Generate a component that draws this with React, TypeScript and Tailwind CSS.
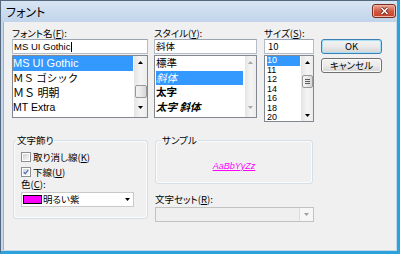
import React from 'react';

// 小さな三角形（スクロールバー・コンボの矢印）
const Tri = ({ up = false, color = '#000' }: { up?: boolean; color?: string }) => (
  <svg width="5" height="3" viewBox="0 0 5 3" className="block">
    <polygon points={up ? '0,3 5,3 2.5,0' : '0,0 5,0 2.5,3'} fill={color} />
  </svg>
);

const Label = ({ text, k }: { text: string; k: string }) => (
  <div className="h-[12px] leading-[12px] text-[9.5px] whitespace-nowrap">
    {text}(<u className="decoration-1 underline-offset-1">{k}</u>):
  </div>
);

interface ScrollProps {
  w: string;
  gap: string;
  upMt: string;
  downMb: string;
  thumbMt?: string;
  grip?: boolean;
  disabled?: boolean;
}

const ScrollBar = ({ w, gap, upMt, downMb, thumbMt, grip, disabled }: ScrollProps) => {
  const color = disabled ? '#a8a8a8' : '#000';
  return (
    <div className={`${w} ${gap} flex flex-col items-center bg-gradient-to-r from-[#e4e4e4] via-[#f4f4f4] to-[#ededed]`}>
      <div className={upMt}>
        <Tri up color={color} />
      </div>
      {thumbMt && (
        <div
          className={`${thumbMt} w-[calc(100%-1px)] h-[13px] rounded-[2px] border border-[#9a9a9a] bg-gradient-to-r from-[#f3f3f3] via-[#e9e9e9] to-[#d6d6d6] flex flex-col items-center justify-center gap-[1px]`}
        >
          {grip && (
            <>
              <div className="w-[5px] h-px bg-[#5c5c5c]" />
              <div className="w-[5px] h-px bg-[#5c5c5c]" />
              <div className="w-[5px] h-px bg-[#5c5c5c]" />
            </>
          )}
        </div>
      )}
      <div className={`mt-auto ${downMb}`}>
        <Tri color={color} />
      </div>
    </div>
  );
};

const TextBox = ({ children, pl }: { children: React.ReactNode; pl: string }) => (
  <div
    className={`h-[15px] border border-[#b4bcc7] border-t-[#9aa3ae] bg-white ${pl} text-[9.5px] leading-[13px] whitespace-nowrap flex items-center`}
  >
    {children}
  </div>
);

const CheckBox = ({ checked }: { checked?: boolean }) => (
  <div className="w-[10px] h-[10px] border border-[#8e8f8f] bg-white p-[1px]">
    <div className="w-full h-full bg-gradient-to-br from-[#d4d4d4] to-[#f7f7f7] flex items-center justify-center">
      {checked && (
        <svg width="8" height="8" viewBox="0 0 8 8" className="block">
          <path d="M1 4.2 L3 6.3 L7 1.2" stroke="#3b63ad" strokeWidth="1.5" fill="none" />
        </svg>
      )}
    </div>
  </div>
);

const Button = ({ children, def }: { children: React.ReactNode; def?: boolean }) => (
  <div
    className={`h-[15px] rounded-[3px] border ${
      def ? 'border-[#3c7fb1] shadow-[inset_0_0_0_1px_#a6e0f8]' : 'border-[#707070] shadow-[inset_0_0_0_1px_#fbfbfb]'
    } bg-gradient-to-b from-[#f2f2f2] via-[#ebebeb] to-[#d4d4d4] flex items-center justify-center text-[9.5px] leading-none`}
  >
    {children}
  </div>
);

const CloseButton = () => (
  <div className="mt-[3px] mr-[1px] w-[24px] h-[14px] rounded-[3px] border border-[#7b2a1d] bg-gradient-to-b from-[#e9a898] via-[#d25a45] to-[#c23e28] shadow-[inset_0_0_0_1px_#eeb4a6] flex items-center justify-center">
    <svg width="9" height="8" viewBox="0 0 9 8" className="block">
      <path d="M1.5 1 L7.5 7 M7.5 1 L1.5 7" stroke="#5a1a10" strokeWidth="3" />
      <path d="M1.5 1 L7.5 7 M7.5 1 L1.5 7" stroke="#ffffff" strokeWidth="1.6" />
    </svg>
  </div>
);

const sizes = ['10', '11', '12', '14', '16', '18', '20'];

export default function App() {
  return (
    <div className="w-[400px] h-[254px] flex flex-col overflow-hidden bg-[#c4d6ec] border-l border-t border-[#56687e] border-r-[3px] border-b-[3px] border-r-[#2ba2d9] border-b-[#2ba2d9] text-black font-['Noto_Sans_CJK_JP',sans-serif] [font-feature-settings:'palt']">
      {/* タイトルバー */}
      <div className="h-[21px] flex items-start justify-between bg-gradient-to-b from-[#d8e5f3] to-[#c1d4eb]">
        <div className="pl-[5px] pt-[4px] text-[12px] leading-[14px]">フォント</div>
        <CloseButton />
      </div>

      {/* 本体 */}
      <div className="ml-[2px] mr-[1px] mb-[1px] flex-1 border-l border-[#9fb2ca] bg-[#f0f0f0] pt-[5px] pl-[8px]">
        {/* 上段 */}
        <div className="flex items-start">
          {/* フォント名 */}
          <div className="w-[136px]">
            <Label text="フォント名" k="F" />
            <TextBox pl="pl-[1px]">
              <span className="font-['Liberation_Sans',sans-serif]">MS UI Gothic</span>
              <span className="inline-block w-px h-[10px] bg-black" />
            </TextBox>
            <div className="mt-[1px] h-[63px] border border-[#828790] bg-white flex overflow-hidden">
              <div className="flex-1 overflow-hidden">
                <div className="h-[14.5px] leading-[14.5px] bg-[#3399ff] text-white text-[11px] font-['Liberation_Sans',sans-serif] whitespace-nowrap">
                  MS UI Gothic
                </div>
                <div className="h-[14.5px] leading-[14.5px] text-[10.5px] [font-feature-settings:normal] whitespace-nowrap">
                  ＭＳ ゴシック
                </div>
                <div className="h-[14.5px] leading-[14.5px] text-[11px] [font-feature-settings:normal] whitespace-nowrap">
                  ＭＳ 明朝
                </div>
                <div className="h-[14.5px] leading-[14.5px] text-[10.5px] font-['Liberation_Sans',sans-serif] whitespace-nowrap">
                  MT Extra
                </div>
              </div>
              <ScrollBar w="w-[13px]" gap="ml-[1px]" upMt="mt-[5px]" thumbMt="mt-[21px]" downMb="mb-[8px]" />
            </div>
          </div>

          {/* スタイル */}
          <div className="w-[103px] ml-[6px]">
            <Label text="スタイル" k="Y" />
            <TextBox pl="pl-[1px]">斜体</TextBox>
            <div className="mt-[1px] h-[63px] border border-[#828790] bg-white flex overflow-hidden">
              <div className="flex-1 pl-[1px] mr-[2px] overflow-hidden text-[10.5px] [font-feature-settings:normal]">
                <div className="h-[14.5px] leading-[14.5px]">標準</div>
                <div className="h-[14.5px] leading-[14.5px] bg-[#3399ff] text-white italic">斜体</div>
                <div className="h-[14.5px] leading-[14.5px] font-bold">太字</div>
                <div className="h-[14.5px] leading-[14.5px] font-bold italic">太字 斜体</div>
              </div>
              <ScrollBar w="w-[11px]" gap="" upMt="mt-[5px]" downMb="mb-[8px]" disabled />
            </div>
          </div>

          {/* サイズ */}
          <div className="w-[50px] ml-[7px]">
            <Label text="サイズ" k="S" />
            <TextBox pl="pl-[3px]">10</TextBox>
            <div className="mt-[1px] h-[67px] border border-[#828790] bg-white flex overflow-hidden">
              <div className="flex-1 pl-[2px] mr-[1px] overflow-hidden text-[9px] font-['Liberation_Sans',sans-serif]">
                {sizes.map((s, i) => (
                  <div
                    key={s}
                    className={`h-[9.5px] leading-[9.5px] ${i === 0 ? 'bg-[#3399ff] text-white' : ''}`}
                  >
                    {s}
                  </div>
                ))}
              </div>
              <ScrollBar w="w-[12px]" gap="" upMt="mt-[5px]" thumbMt="mt-[11px]" downMb="mb-[4px]" grip />
            </div>
          </div>

          {/* ボタン */}
          <div className="w-[61px] ml-[7px] mt-[12px]">
            <Button def>OK</Button>
            <div className="mt-[4px]">
              <Button>キャンセル</Button>
            </div>
          </div>
        </div>

        {/* 下段 */}
        <div className="mt-[12px] flex items-start">
          <fieldset className="ml-[1px] w-[135px] h-[85px] rounded-[3px] border border-[#d5dfe5] shadow-[inset_0_0_0_1px_#fafcfd]">
            <legend className="ml-[2px] px-[1px] h-[12px] leading-[12px] text-[9.5px]">文字飾り</legend>
            <div className="pl-[7px]">
              <div className="mt-[5px] h-[12px] flex items-center">
                <CheckBox />
                <span className="ml-[2px] text-[9.5px] leading-[12px]">
                  取り消し線(<u className="decoration-1 underline-offset-1">K</u>)
                </span>
              </div>
              <div className="mt-[3px] h-[12px] flex items-center">
                <CheckBox checked />
                <span className="ml-[2px] text-[9.5px] leading-[12px]">
                  下線(<u className="decoration-1 underline-offset-1">U</u>)
                </span>
              </div>
              <Label text="色" k="C" />
              <div className="mt-[2px] w-[113px] h-[15px] border border-[#c9c9c9] bg-white flex items-center pl-[1px] pr-[3px]">
                <div className="w-[19px] h-[9px] bg-[#ff00ff] border border-black" />
                <span className="ml-px text-[9.5px] leading-none">明るい紫</span>
                <span className="ml-auto">
                  <Tri />
                </span>
              </div>
            </div>
          </fieldset>

          <div className="ml-[7px] w-[159px]">
            <fieldset className="w-[158px] h-[50px] rounded-[3px] border border-[#d5dfe5] shadow-[inset_0_0_0_1px_#fafcfd]">
              <legend className="ml-[5px] px-[1px] h-[12px] leading-[12px] text-[9.5px]">サンプル</legend>
              <div className="h-[36px] pt-[4px] flex items-center justify-center">
                <span className="text-[9px] leading-none italic underline decoration-1 text-[#ff00ff] font-['Liberation_Sans',sans-serif]">
                  AaBbYyZz
                </span>
              </div>
            </fieldset>
            <div className="mt-[9px]">
              <Label text="文字セット" k="R" />
            </div>
            <div className="mt-[2px] h-[15px] border border-[#c2c2c2] bg-[#efefef] flex">
              <div className="flex-1" />
              <div className="w-[14px] bg-[#f6f6f6] border-l border-[#dcdcdc] flex items-center justify-center">
                <Tri color="#a0a0a0" />
              </div>
            </div>
          </div>
        </div>
      </div>
    </div>
  );
}
